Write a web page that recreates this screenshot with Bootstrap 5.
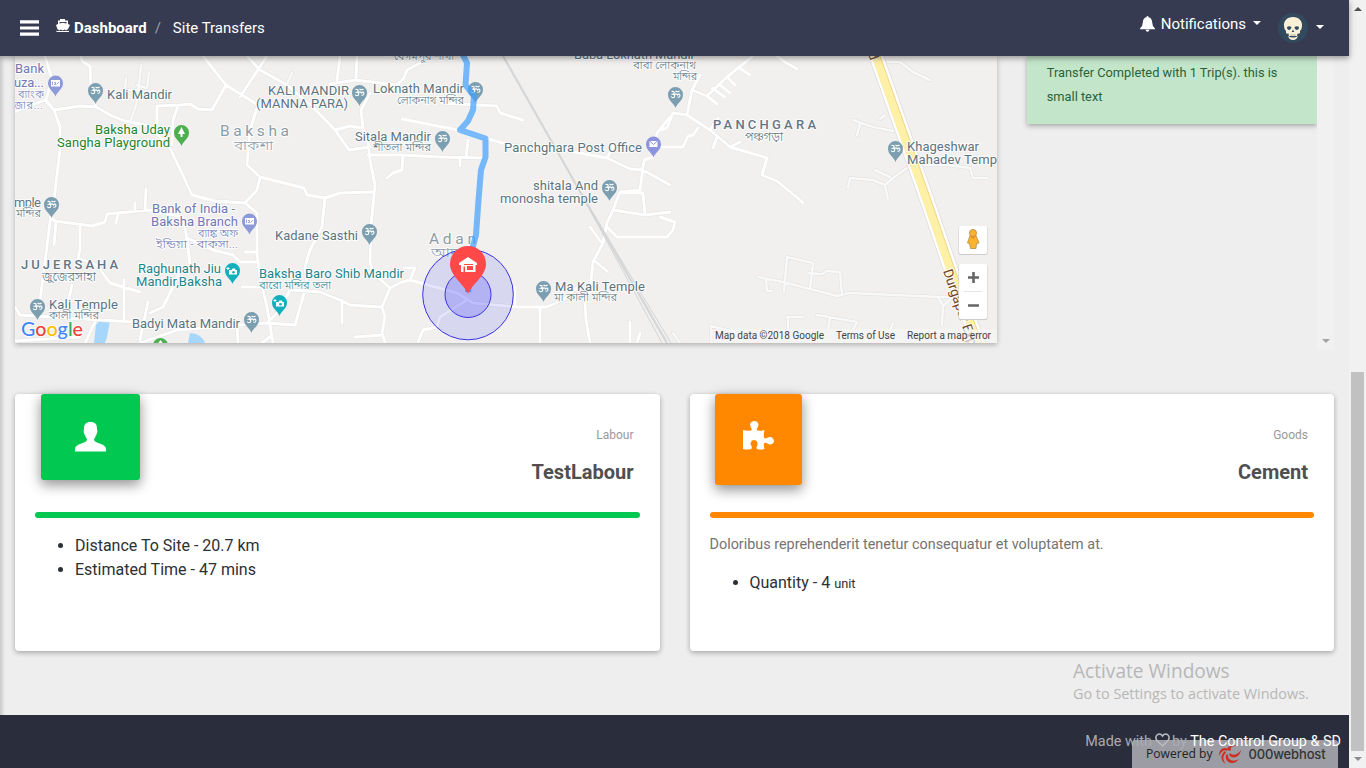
<!DOCTYPE html>
<html lang="en">
<head>
<meta charset="utf-8">
<meta name="viewport" content="width=device-width, initial-scale=1">
<title>Site Transfers</title>
<link href="https://cdn.jsdelivr.net/npm/bootstrap@5.3.0/dist/css/bootstrap.min.css" rel="stylesheet">
<style>
body{font-family:Roboto,"Noto Sans",sans-serif;background:#eee;width:1366px;height:768px;overflow:hidden;font-weight:400;color:#212529}
.page-col{width:1349px;height:768px}
.edge-shade{left:0;top:56px;width:5px;height:659px;background:linear-gradient(90deg,#c9c9c9,#eee0)}
.topbar{height:56px;background:#363b51;color:#fff;box-shadow:0 2px 5px rgba(0,0,0,.26),0 2px 8px rgba(0,0,0,.16);z-index:3;padding:0 25px 0 20px}
.crumbs{font-size:15px;line-height:24px}
.crumbs b{font-weight:700}
.noti{font-size:15px;margin:-7px 7px 0 6px}
.caret{width:0;height:0;border:4px solid transparent;border-top-color:#fff;border-bottom:0}
.grid-30{--bs-gutter-x:30px}
.fit-map{height:287px;box-shadow:0 2px 5px rgba(0,0,0,.25)}
.fit-map svg{display:block}
.fit-map text:lang(bn){font-weight:300}
.side-pane{height:294px}
.note-ok{width:290px;height:68px;background:#c3e6cb;color:#2b6239;font-size:12.8px;line-height:24px;padding:5px 20px;box-shadow:0 2px 5px rgba(0,0,0,.3)}
.pane-bar{width:17px;background:#f1f1f1}
.cards-row{margin-top:44px}
.info-card{height:257px;border:0;border-radius:4px;box-shadow:0 2px 5px rgba(0,0,0,.22),0 1px 6px rgba(0,0,0,.1)}
.tile{border-radius:3px;box-shadow:0 5px 11px rgba(0,0,0,.25),0 4px 15px rgba(0,0,0,.22)}
.tile-g{width:99px;height:86px;margin-left:26px;background:#00c851}
.tile-o{width:87px;height:91px;margin-left:25px;background:#ff8800}
.kind{font-size:12px;line-height:18px;color:#999;margin-top:32px}
.heading{font-size:20px;line-height:24px;font-weight:700;color:#4f4f4f;margin-top:16px}
.head-zone{height:118px}
.rule{height:6px;border-radius:3px;margin:0 20px}
.facts{margin:0;padding-left:60px;font-size:16px;line-height:24px;color:#2c3034}
.blurb{font-size:14.4px;line-height:22px;color:#747373;margin:16px 20px 0 20px}
.foot{height:53px;background:#292d3c;font-size:14.4px;color:#a9abb1;padding:16px 8px 0 0}
.credit{z-index:2}
.credit span{color:#fff}
.host{left:1132px;top:740px;width:206px;height:28px;background:#9c9da4;font:400 12.1px/28px "Open Sans",sans-serif;color:#222;border-radius:3px 3px 0 0;padding-left:14px;white-space:nowrap;z-index:1}
.host-name{font-family:Inter,sans-serif;font-weight:500;font-size:13px;letter-spacing:-.15px;color:#333}
.watermark{left:1073px;top:658px;font-family:"Open Sans","Noto Sans",sans-serif;color:#b7b7b7;white-space:nowrap}
.scroller{width:17px;background:#f1f1f1}
.thumb{width:13px;height:379px;margin-top:372px;background:#c1c1c1}
.arrow-up,.arrow-dn{left:5px;width:0;height:0;border:4px solid transparent}
.arrow-up{top:7px;border-bottom-color:#505050;border-top:0}
.arrow-dn{bottom:7px;border-top-color:#8c8c8c;border-bottom:0}
</style>
</head>
<body class="d-flex">
<div class="page-col d-flex flex-column position-relative">
  <nav class="topbar d-flex align-items-center justify-content-between position-relative flex-shrink-0">
    <div class="d-flex align-items-center">
      <svg width="19" height="16" viewBox="0 0 19 16"><path d="M0 1.8H19M0 8H19M0 14.2H19" stroke="#fff" stroke-width="3.2"/></svg>
      <svg class="ms-3" style="margin-top:-5px" width="16" height="14" viewBox="0 0 16 14"><path fill="#fff" d="M5 0H10V1.5H13V5L15 6L13 10.2Q11 11.6 9.5 10.4Q7.500 11.800 6 10.400Q4 11.600 2.500 10.200L1 6L3 5V1.500H5ZM4.500 3V4.600L7.500 3.800L11.500 4.600V3ZM1.500 11.500Q3 12.500 4.500 11.500Q6 12.700 7.500 11.500Q9.500 12.700 11 11.500Q12.500 12.500 14 11.500V13H1.500Z"/></svg>
      <div class="crumbs d-flex ms-1"><b style="margin-left:-1px">Dashboard</b><span class="mx-2 text-white-50">/</span><span style="margin-left:4px">Site Transfers</span></div>
    </div>
    <div class="d-flex align-items-center">
      <svg style="margin-top:-8px" width="15" height="16" viewBox="0 0 15 16"><path fill="#fff" d="M7.500 0Q8.500 0 8.500 1.300Q12 2 12.200 6.500Q12.300 10.500 15 12.500V13.200H0V12.500Q2.700 10.500 2.800 6.500Q3 2 6.500 1.300Q6.500 0 7.500 0ZM5.500 13.700H9.500Q9 15.700 7.500 15.700Q6 15.700 5.500 13.700Z"/></svg>
      <span class="noti">Notifications</span>
      <i class="caret" style="margin-top:-11px"></i>
      <svg class="mx-2" style="margin-left:17px!important" width="30" height="30" viewBox="0 0 30 30"><circle cx="15" cy="15" r="15" fill="#324a5e"/><path fill="#fbf1d8" d="M15 4C9 4 5.500 8 6 13Q6 16 8 18V20Q9 21 10.500 20.500L11 23H19L19.500 20.500Q21 21 22 20V18Q24 16 24 13C24.500 8 21 4 15 4ZM10 22.500Q11 27 15 27Q19 27 20 22.500Q18 25 15 24.500Q12 25 10 22.500Z"/><path fill="#324a5e" d="M9 14Q11 12.500 13.500 14Q13 17 10.500 17Q9 16.500 9 14ZM16.500 14Q19 12.500 21 14Q21 17 18.500 17Q16.500 16.500 16.500 14ZM15 16.500L16.300 19H13.700Z"/><path stroke="#9c9a8c" stroke-width=".7" d="M13 21V23M15 21V23M17 21V23"/></svg>
      <i class="caret" style="margin-top:-3px"></i>
    </div>
  </nav>

  <main class="flex-grow-1">
    <div class="row grid-30 m-0">
      <div class="col-9">
        <div class="fit-map">
<svg width="982" height="287" viewBox="15 56 982 287" font-family="Roboto, 'Noto Sans', 'Noto Sans Bengali', sans-serif">
<defs>
<g id="pin"><path d="M0 11C-1.500 6-7.500 4-7.500-2.500A7.500 7.500 0 0 1 7.500-2.500C7.500 4 1.500 6 0 11Z"/></g>
<g id="om"><use href="#pin" fill="#7b9eb0"/><path d="M-4-5.500Q-.5-6-1.500-3.500L-3-2.700Q0-2.500-1 0Q-3 1.500-4.500-.5M-1-2.500Q1-4 2-2Q4-4 4.500-1.500Q4 1 2 0M0-6Q2-4.500 4-6" fill="none" stroke="#fff" stroke-width="1.100"/></g>
<g id="bank"><use href="#pin" fill="#8d9ad8"/><path d="M-4.500-5.500H4.500V1H-4.500Z" fill="#fff"/><path d="M-3-4V-.5M-1.500-3H0V-1H-1.500M3.500-3.500L1-1" fill="none" stroke="#8d9ad8" stroke-width=".9"/></g>
<g id="cam"><use href="#pin" fill="#12b0bd"/><path fill="#fff" d="M-3.500-3H-1L0-4.500H2.500L3-3H4.500V1.500H-3.500Z"/><circle cx="1" cy="-.8" r="1.300" fill="#12b0bd"/><path d="M-4.500-6V-3M-6-4.500H-3" stroke="#fff"/></g>
<g id="roads" fill="none" stroke-linejoin="round" stroke-linecap="round">
<path d="M45 56L52 79L46 100L54 110L60 127L60 150L54 200L50 222L44 270L40 300M81 56L82 61L90 66L91 90L96 107L80 106L54 110L45 100L15 112M96 107L112 116L125 121L145 125L157 134L170 148L192 195L215 201L245 203M157 134L157 106L180 105L190 104L198 109L212 110L226 85M178 106L173 120L172 145M203 56L226 85L258 105L250 130L247 165L260 177L304 188L307 195L325 198L340 193L372 192M247 56L260 70L287 85L313 107L335 130L349 150L370 147M335 130L350 126L361 128M267 56L240 97M340 56L337 80M357 56L356 80L330 84M355 80L397 85L404 78L407 70L420 63L425 56M370 93L361 110L363 128L368 142L370 160L375 185L371 225L370 262L373 273L390 288L402 282L410 280L457 293L473 303L517 307L547 307L563 300"/>
<path d="M402 119L427 124L458 130L485 138L510 145L563 150L607 158L630 169L643 170L670 185L668 184M441 103L477 105L497 106L500 113L523 120M368 155L403 155L440 157L483 158M403 155L402 170L393 173L387 178M468 140L466 158M460 158V166M607 158L614 145M670 117L657 133L653 157L644 160L640 190L620 192L613 210L607 223L603 243L593 262L590 290L585 302L586 320L590 342M620 193L643 193L645 215L613 210M645 215L670 212M607 227L617 237L667 237L673 230L675 222L660 217"/>
<path d="M660 130L667 128L673 113L687 115L710 130L730 147L767 158L762 175L777 181L800 200L803 203M687 115L692 90L707 96L727 77L753 56M692 90L700 75M698 128L693 135L688 136L683 147L660 147M777 56L785 62L797 69M720 85L730 93M727 77L735 85M738 67L750 75M707 96L717 104M712 88L725 97M710 130L718 118M730 147L740 142M717 137L713 148"/>
<path d="M50 217L55 221L92 226L105 222L107 214L150 210L183 217L187 240L190 265M146 189L145 210M135 203V210M118 215L116 223M56 222L54 245M80 226L80 250L78 258L97 265L110 283L140 292M124 280V320M260 178L257 190L245 203L257 213L257 253L260 277L267 307L273 343M187 238L213 250L233 255L240 262L257 262M245 252H257M242 287H262M325 197L322 227L310 250L305 267L307 283L295 325L267 323L177 330L140 343M267 323L280 310L290 290L320 292L340 300L350 305L380 307M180 270L175 283L163 307L150 313M15 307L20 315L117 321L134 322M148 302L140 340M72 285L68 303M390 288L382 307L385 317L382 333L385 342M355 337L382 335M342 300V323M404 268H415L410 280M467 300L440 317L437 327L423 330L418 342M540 307V343M515 287V305M630 322V343M640 333L637 343M590 227L601 242M596 262L608 272M563 300L580 285M15 341L80 337M262 343L271 336M237 328L238 342M95 322L85 343"/>
</g>
<g id="lanes" fill="none" stroke-linejoin="round" stroke-linecap="round"><path d="M141 65L138 95L136 105L131 120M149 72L147 88L137 85M126 78L125 90L138 90M292 73L287 84M853 120L873 127L893 131M860 124L857 135M887 62L900 62L913 72L930 80M920 165L947 165L970 168L973 178L988 178M907 168L893 178L885 185L873 180L850 178L848 188M885 185L888 200M875 170L890 177M758 277L783 282L810 289L837 296L850 293L940 297L953 297M787 257L813 263L810 289M787 257L784 292M808 273L822 274L827 271L840 272L842 295M766 280L767 291L772 291M938 297L943 306L942 325M952 298L943 306M787 317H803M788 318V329M817 315L857 322L853 330M830 318L828 330M711 343V326L735 332M893 323L890 330M673 333L680 343M885 115L880 119"/></g>
</defs>
<rect x="15" y="56" width="982" height="287" fill="#f1f0ef"/>
<path d="M102 318L110 321L107 337L105 343H94L96 325ZM190 333Q201 333 205 343H188Z" fill="#a7d6fd"/>
<use href="#roads" stroke="#e2e2e2" stroke-width="3.800"/><use href="#lanes" stroke="#dfdfdf" stroke-width="3.600"/>
<use href="#roads" stroke="#fff" stroke-width="2.900"/><use href="#lanes" stroke="#f9f9f9" stroke-width="2.600"/>
<path d="M503 56L578 188L667 343" fill="none" stroke="#d4d6d7" stroke-width="2.200"/><path d="M578 188L662 343M578 188L671 343" fill="none" stroke="#d2d4d5" stroke-width="1"/>
<path d="M874 50L927 200L950 267L981 351" fill="none" stroke="#dcdcdc" stroke-width="15"/><path d="M874 50L927 200L950 267L981 351" fill="none" stroke="#fff" stroke-width="13.500"/><path d="M874 50L927 200L950 267L981 351" fill="none" stroke="#f3d684" stroke-width="8.500"/><path d="M873.500 50L926.500 200L949.500 267L980.500 351" fill="none" stroke="#fff0a8" stroke-width="7.500"/>
<g fill="#5b7480" font-size="13" font-weight="400" stroke="#fff" stroke-width="2" paint-order="stroke" stroke-linejoin="round" stroke-opacity=".85">
<g fill="#7178b5"><text x="15" y="73" textLength="29">Bank</text><text x="14" y="87" textLength="30">uza...</text><text lang="bn" x="18" y="98" font-size="11" textLength="26">ব্যাংক</text><text lang="bn" x="14" y="109" font-size="11" textLength="29">জার...</text>
<text x="152" y="213" textLength="83">Bank of India -</text><text x="151" y="226" textLength="87">Baksha Branch</text><text lang="bn" x="198" y="237" font-size="11" textLength="40" lengthAdjust="spacingAndGlyphs">ব্যাঙ্ক অফ</text><text lang="bn" x="156" y="248" font-size="11" textLength="82" lengthAdjust="spacingAndGlyphs">ইন্ডিয়া - বাকসা...</text></g>
<text x="107" y="98.500" textLength="65">Kali Mandir</text>
<g fill="#25842c"><text x="95" y="133.500" textLength="75">Baksha Uday</text><text x="57" y="147" textLength="113">Sangha Playground</text></g>
<g fill="#8d9ba8"><text x="220" y="136" font-size="15.500" textLength="69">Baksha</text><text lang="bn" x="234" y="150" font-size="13" textLength="39" lengthAdjust="spacingAndGlyphs">বাকশা</text><text x="429" y="244" font-size="15.500" textLength="47">Adan</text><text lang="bn" x="431" y="257" font-size="13" textLength="42" lengthAdjust="spacingAndGlyphs">আদান</text></g>
<text x="268" y="94.500" textLength="81">KALI MANDIR</text><text x="256" y="107.500" textLength="92">(MANNA PARA)</text>
<text x="373" y="93" textLength="91">Loknath Mandir</text><text lang="bn" x="397" y="104" font-size="11" textLength="67" lengthAdjust="spacingAndGlyphs">লোকনাথ মন্দির</text>
<text x="355" y="140.500" textLength="76">Sitala Mandir</text><text lang="bn" x="373" y="151" font-size="11" textLength="58" lengthAdjust="spacingAndGlyphs">শীতলা মন্দির</text><text lang="bn" x="384" y="60" font-size="11" textLength="70" lengthAdjust="spacingAndGlyphs">– বেগমপুর শাখা</text>
<text x="574" y="59" textLength="121">Baba Loknath Mandir</text><text lang="bn" x="633" y="69" font-size="11" textLength="63" lengthAdjust="spacingAndGlyphs">বাবা লোকনাথ</text><text lang="bn" x="673" y="80" font-size="11" textLength="24" lengthAdjust="spacingAndGlyphs">মন্দির</text>
<text x="504" y="152" textLength="138">Panchghara Post Office</text>
<text x="533" y="189.500" textLength="65">shitala And</text><text x="500" y="203" textLength="98">monosha temple</text>
<g fill="#647684" font-weight="500"><text x="713" y="129" textLength="103">PANCHGARA</text><text x="21" y="269" textLength="97">JUJERSAHA</text></g><text lang="bn" x="745" y="141" font-size="12" textLength="38" lengthAdjust="spacingAndGlyphs">পঞ্চগড়া</text><text lang="bn" x="42" y="281" font-size="12" textLength="54" lengthAdjust="spacingAndGlyphs">জুজেরসাহা</text>
<text x="907" y="150.500" textLength="72">Khageshwar</text><text x="907" y="164" textLength="90">Mahadev Temp</text>
<text x="14" y="207" textLength="27">mple</text><text lang="bn" x="16" y="217" font-size="11" textLength="25" lengthAdjust="spacingAndGlyphs">মন্দির</text>
<text x="275" y="240" textLength="83">Kadane Sasthi</text>
<text x="49" y="308.500" textLength="69">Kali Temple</text><text lang="bn" x="49" y="319" font-size="11" textLength="50" lengthAdjust="spacingAndGlyphs">কালী মন্দির</text>
<text x="132" y="328" textLength="108">Badyi Mata Mandir</text>
<text x="555" y="291" textLength="90">Ma Kali Temple</text><text lang="bn" x="554" y="301" font-size="11" textLength="63" lengthAdjust="spacingAndGlyphs">মা কালী মন্দির</text>
<g fill="#1d858c"><text x="138" y="273" textLength="83">Raghunath Jiu</text><text x="136" y="286" textLength="86">Mandir,Baksha</text><text x="259" y="278" textLength="145">Baksha Baro Shib Mandir</text><text lang="bn" x="259" y="289" font-size="11" textLength="72" lengthAdjust="spacingAndGlyphs">বারো মন্দির তলা</text></g>
<text transform="translate(943 271) rotate(71)" fill="#73451b" font-size="13.500" textLength="80">Durgapur Exp</text><text transform="translate(868 54) rotate(70)" fill="#73451b">d</text>
</g>
<use href="#bank" x="55.500" y="85.500"/><use href="#bank" x="249.500" y="223.500"/>
<use href="#om" x="95.500" y="93"/><use href="#om" x="359.500" y="95"/><use href="#om" x="475.500" y="92"/><use href="#om" x="442.500" y="141"/><use href="#om" x="675.500" y="97"/><use href="#om" x="609.500" y="190"/><use href="#om" x="895.500" y="151"/><use href="#om" x="51.500" y="207"/><use href="#om" x="369.500" y="234"/><use href="#om" x="37.500" y="309"/><use href="#om" x="251.500" y="322"/><use href="#om" x="543.500" y="291"/>
<use href="#cam" x="232.500" y="273"/><use href="#cam" x="279.500" y="305"/>
<g fill="#4caf50"><use href="#pin" x="181.500" y="135"/><use href="#pin" x="160.500" y="348"/></g><path d="M181.500 127L185 134H182.500V137H180.500V134H178ZM160.500 340L163.500 344H157.500Z" fill="#fff"/>
<use href="#pin" x="653.500" y="146.500" fill="#8d93dc"/><path fill="#fff" d="M649.500 141H657.500V147H649.500Z"/><path d="M649.500 141L653.500 144.500L657.500 141" fill="none" stroke="#8d93dc"/>
<path d="M462 53L467 63L465.500 85L470 91L474 96L473 110L468 121L460 130L485.500 138.500L485.500 157L481 170L478.500 200L476 235L472 250L468 292" fill="none" stroke="#3fa0ff" stroke-opacity=".7" stroke-width="6" stroke-linejoin="round"/>
<g fill="#00f" fill-opacity=".1" stroke="#3b32e4" stroke-width="1"><circle cx="468" cy="294.500" r="45.300"/><circle cx="468" cy="294.500" r="23" fill-opacity=".17"/></g>
<path fill="#ff4848" d="M468 294C464 284 450 276 450 264A17.800 17.800 0 0 1 486 264C486 276 472 284 468 294Z"/><path fill="#fff" fill-rule="evenodd" d="M468 257L477 263V265H475.500V272H465V266.500H463.500V272H461V265H459V263ZM467 266V270H473V266Z"/><path d="M464 264.500H473" stroke="#ff4848"/>
<g font-size="20" font-weight="500" font-family="Lato, Roboto" stroke="#fff" stroke-width="1.500" paint-order="stroke"><text x="21" y="336" fill="#4285f4" textLength="62" lengthAdjust="spacingAndGlyphs"><tspan>G</tspan><tspan fill="#ea4335">o</tspan><tspan fill="#fbbc05">o</tspan><tspan>g</tspan><tspan fill="#34a853">l</tspan><tspan fill="#ea4335">e</tspan></text></g>
<rect x="710" y="329" width="287" height="14" fill="#f5f5f5" fill-opacity=".7"/>
<g font-size="10" fill="#444"><text x="715" y="339" textLength="109">Map data ©2018 Google</text><text x="836" y="339" textLength="59">Terms of Use</text><text x="907" y="339" textLength="84">Report a map error</text></g>
<g fill="#ccc"><rect x="958.500" y="226.500" width="29" height="28.500" rx="2"/><rect x="958.500" y="264.500" width="29" height="55.500" rx="2"/></g>
<g fill="#fff"><rect x="959" y="226" width="28" height="28" rx="2"/><rect x="959" y="264" width="28" height="55" rx="2"/></g>
<path d="M964 291.500H982" stroke="#e6e6e6"/><path d="M968 277.500H979M973.500 272V283M968 305.500H979" stroke="#666" stroke-width="2.600"/>
<path fill="#f9b32f" stroke="#ad8340" stroke-width=".7" d="M970 235.500H976L979 243L976.500 243.500L976 248.500H970.500L969.500 243.500L967.500 243Z"/><circle cx="973" cy="233" r="3.600" fill="#f9b32f" stroke="#ad8340" stroke-width=".7"/><path d="M970.500 236.500L973 239L975.500 236.500" fill="#ef8420"/>
</svg>
        </div>
      </div>
      <div class="col-3">
        <div class="side-pane d-flex justify-content-between">
          <div class="note-ok">Transfer Completed with 1 Trip(s). this is small text</div>
          <div class="pane-bar d-flex align-items-end justify-content-center"><i class="caret" style="border-top-color:#a3a3a3;margin-bottom:7px"></i></div>
        </div>
      </div>
    </div>
    <div class="row grid-30 mx-0 cards-row">
      <div class="col-6"><div class="card info-card">
        <div class="head-zone d-flex justify-content-between">
          <div class="tile tile-g d-flex align-items-center justify-content-center"><svg width="31" height="30" viewBox="0 0 31 30"><path fill="#fff" d="M15.500 0C11 0 8.700 2.500 9 7C8 9 9 12 10.500 14.500Q12 17 12 18Q11.500 20 5 22Q0 24 0 27V29.500H31V27Q31 24 26 22Q19.500 20 19 18Q19 17 20.500 14.500C22 12 23 9 22 7C22.300 2.500 20 0 15.500 0Z"/></svg></div>
          <div class="text-end" style="margin-right:26px"><div class="kind">Labour</div><div class="heading">TestLabour</div></div>
        </div>
        <div class="rule" style="background:#00c851"></div>
        <ul class="facts" style="margin-top:16px"><li>Distance To Site - 20.7 km</li><li>Estimated Time - 47 mins</li></ul>
      </div></div>
      <div class="col-6"><div class="card info-card">
        <div class="head-zone d-flex justify-content-between">
          <div class="tile tile-o d-flex align-items-center justify-content-center"><svg style="margin:-8px 0 0 0" width="31" height="29" viewBox="0 0 31 29"><path fill="#fff" d="M0 9Q4 10 8 9.500Q9.500 8.500 8 6.500Q6.500 4 7.500 2Q9 0 11.300 0Q14 0 15 2Q16 4 14.500 6.500Q13 8.500 14.500 9.500Q18 10 21.500 9Q20.500 13 21 16.500Q22 18 24 17Q27 15.500 29 16.500Q31 18 31 20Q31 22 29 23Q27 24 24.500 22.500Q22 21 21 22.500Q20.500 25 21.500 28Q18 29 14 28Q13 27 14 25Q15 22.500 14 20.500Q13 19 11 19Q8.500 19 8 21Q7 23 8.500 25Q9.500 27.500 8 28Q4 29 0 28Z"/></svg></div>
          <div class="text-end" style="margin-right:26px"><div class="kind">Goods</div><div class="heading">Cement</div></div>
        </div>
        <div class="rule" style="background:#ff8800"></div>
        <p class="blurb">Doloribus reprehenderit tenetur consequatur et voluptatem at.</p>
        <ul class="facts" style="margin-top:15px"><li>Quantity - 4 <span style="font-size:12.8px">unit</span></li></ul>
      </div></div>
    </div>
  </main>
  <footer class="foot text-end flex-shrink-0"><div class="credit position-relative">Made with <svg width="15" height="14" viewBox="0 0 15 14" style="margin:-4px -1px 0 -1px"><path d="M7.500 13L2 7.500Q-.5 4 2.500 1.500Q5.500-.2 7.500 3Q9.500-.2 12.500 1.500Q15.500 4 13 7.500Z" fill="none" stroke="#b9bbc1" stroke-width="1.500"/></svg> by <span>The Control Group &amp; SD</span></div></footer>
  <div class="edge-shade position-absolute"></div>
  <div class="host position-absolute d-flex">Powered by<svg class="flex-shrink-0" style="margin:3px 5px 0 7px" width="24" height="23" viewBox="0 0 24 23"><g fill="#cf2e22"><path d="M10 8C6 5 10 1 19 3C13 2.500 11 4 12 7ZM11 10C13 13 19 12 22 7C21 14 14 17 10 12ZM9 11C8 16 13 20 20 16C15 23 5 20 7 12ZM7 10C3 13 4 18 7 21C1 18 1 12 6 8ZM8 8C5 6 2 9 0 13C0 7 4 3 9 6Z"/></g></svg><span class="host-name">000webhost</span></div>
  <div class="watermark position-absolute"><div style="font-size:19.1px;line-height:26px">Activate Windows</div><div style="font-size:14.4px;line-height:19px">Go to Settings to activate Windows.</div></div>
</div>
<aside class="scroller position-relative d-flex justify-content-center"><i class="arrow-up position-absolute"></i><div class="thumb"></div><i class="arrow-dn position-absolute"></i></aside>
<script src="https://cdn.jsdelivr.net/npm/bootstrap@5.3.0/dist/js/bootstrap.bundle.min.js"></script>
</body>
</html>
